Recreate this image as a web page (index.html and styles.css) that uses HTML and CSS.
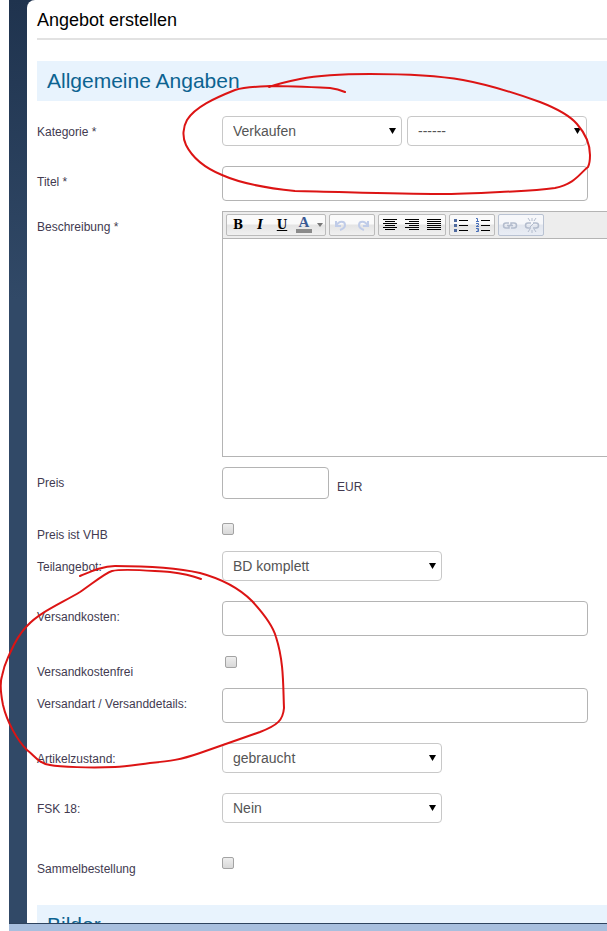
FILE: index.html
```
<!DOCTYPE html>
<html lang="de">
<head>
    <meta charset="UTF-8">
    <meta name="viewport" content="width=device-width, initial-scale=1.0">
    <title>Angebot erstellen</title>
    <link rel="stylesheet" href="styles.css">
</head>
<body>
    <div class="window">
        <main class="page">
            <h1>Angebot erstellen</h1>

            <form>
                <h2>Allgemeine Angaben</h2>

                <div class="row">
                    <label for="kategorie">Kategorie *</label>
                    <div class="field">
                        <span class="select small"><select id="kategorie"><option>Verkaufen</option></select></span>
                        <span class="select small"><select aria-label="Unterkategorie"><option>------</option></select></span>
                    </div>
                </div>

                <div class="row tight">
                    <label for="titel">Titel *</label>
                    <div class="field"><input type="text" id="titel"></div>
                </div>

                <div class="row tight">
                    <label for="beschreibung">Beschreibung *</label>
                    <div class="editor">
                        <div class="toolbar">
                            <div class="group">
                                <button type="button" class="glyph bold">B</button>
                                <button type="button" class="glyph italic">I</button>
                                <button type="button" class="glyph underline">U</button>
                                <button type="button" class="glyph color">A</button>
                                <button type="button" class="more" aria-label="Farbe wählen">
                                    <svg width="6" height="4"><path d="M0 0h6L3 4z" fill="#777"/></svg>
                                </button>
                            </div>
                            <div class="group">
                                <button type="button" aria-label="Rückgängig">
                                    <svg width="16" height="16" fill="none" stroke="#c0cce8" stroke-width="2"><path d="M3 4v5h5M3 9c3-6 9-5 9-1 0 3-2 4-5 5"/></svg>
                                </button>
                                <button type="button" aria-label="Wiederholen">
                                    <svg width="16" height="16" fill="none" stroke="#c0cce8" stroke-width="2"><path d="M13 4v5H8M13 9c-3-6-9-5-9-1 0 3 2 4 5 5"/></svg>
                                </button>
                            </div>
                            <div class="group">
                                <button type="button" aria-label="Zentriert">
                                    <svg width="16" height="16" stroke="#000"><path d="M1 2.5h14M3 4.5h10M1 6.5h14M3 8.5h10M1 10.5h14M3 12.5h10"/></svg>
                                </button>
                                <button type="button" aria-label="Rechtsbündig">
                                    <svg width="16" height="16" stroke="#000"><path d="M1 2.5h14M5 4.5h10M1 6.5h14M5 8.5h10M1 10.5h14M5 12.5h10"/></svg>
                                </button>
                                <button type="button" aria-label="Blocksatz">
                                    <svg width="16" height="16" stroke="#000"><path d="M1 2.5h14M1 4.5h14M1 6.5h14M1 8.5h14M1 10.5h14M1 12.5h14"/></svg>
                                </button>
                            </div>
                            <div class="group">
                                <button type="button" aria-label="Liste">
                                    <svg width="16" height="16"><path d="M6 3.5h9M6 8.5h9M6 13.5h9" stroke="#000"/><path d="M1 2h3v3H1zM1 7h3v3H1zM1 12h3v3H1z" fill="#4f6a9f"/></svg>
                                </button>
                                <button type="button" aria-label="Nummerierte Liste">
                                    <svg width="16" height="16"><path d="M6 3.5h9M6 8.5h9M6 13.5h9" stroke="#000"/><path d="M1 1.5h1.5v3M1 4.5h3M1 6.5h2.5v1.5L1 9.5h3M1 11.5h2.5v3H1M2 13h1.5" fill="none" stroke="#4a70b8"/></svg>
                                </button>
                            </div>
                            <div class="group off">
                                <button type="button" aria-label="Link">
                                    <svg width="16" height="16" fill="none" stroke="#b3bccd" stroke-width="1.5"><path d="M7 6H4a2.5 2.5 0 0 0 0 5h3V9M9 11h3a2.5 2.5 0 0 0 0-5H9v2M5 8.5h6"/></svg>
                                </button>
                                <button type="button" aria-label="Link entfernen">
                                    <svg width="16" height="16" fill="none" stroke="#b3bccd" stroke-width="1.5"><path d="M7 6H4a2.5 2.5 0 0 0 0 5h3M9 11h3a2.5 2.5 0 0 0 0-5H9"/><path d="M8 1v3M4 1l2 3M12 1l-2 3M8 13v3M4 15l2-3M12 15l-2-3M6 10l4-4" stroke-width="1"/></svg>
                                </button>
                            </div>
                        </div>
                        <textarea id="beschreibung"></textarea>
                    </div>
                </div>

                <div class="row">
                    <label for="preis">Preis</label>
                    <div class="field"><input type="text" id="preis" class="price"><span class="unit">EUR</span></div>
                </div>

                <div class="row check">
                    <label for="vhb">Preis ist VHB</label>
                    <div class="field"><input type="checkbox" id="vhb"></div>
                </div>

                <div class="row">
                    <label for="teilangebot">Teilangebot:</label>
                    <div class="field"><span class="select"><select id="teilangebot"><option>BD komplett</option></select></span></div>
                </div>

                <div class="row">
                    <label for="versandkosten">Versandkosten:</label>
                    <div class="field"><input type="text" id="versandkosten"></div>
                </div>

                <div class="row check free">
                    <label for="versandkostenfrei">Versandkostenfrei</label>
                    <div class="field"><input type="checkbox" id="versandkostenfrei"></div>
                </div>

                <div class="row">
                    <label for="versandart">Versandart / Versanddetails:</label>
                    <div class="field"><input type="text" id="versandart"></div>
                </div>

                <div class="row">
                    <label for="zustand">Artikelzustand:</label>
                    <div class="field"><span class="select"><select id="zustand"><option>gebraucht</option></select></span></div>
                </div>

                <div class="row wide">
                    <label for="fsk">FSK 18:</label>
                    <div class="field"><span class="select"><select id="fsk"><option>Nein</option></select></span></div>
                </div>

                <div class="row check last">
                    <label for="sammel">Sammelbestellung</label>
                    <div class="field"><input type="checkbox" id="sammel"></div>
                </div>

                <h2>Bilder</h2>
            </form>
        </main>
        <footer class="statusbar"></footer>
    </div>

    <!-- red pen marks -->
    <svg class="marks" width="607" height="931" viewBox="0 0 607 931" fill="none" stroke="#dc1414" stroke-width="2" stroke-linecap="round" stroke-linejoin="round">
        <path d="M269 87C280 83 290 81 300 79C315 76 330 74 370 74C410 74 440 76 463 80C490 85 515 93 540 102C558 109 571 117 577 124C584 132 590 143 590 155Q590 163 588 167C580 173 575 184 555 188C535 191 520 191 500 192C480 193 460 194 440 194C395 194 345 192 295 191C265 188 240 183 222 175C205 168 192 157 186 145C182 137 183 127 187 120C195 107 215 98 235 90C247 86 260 87 270 86C290 86 310 87 330 88Q338 89 345 92"/>
        <path d="M80 576C92 571 103 566 115 566C145 566 178 568 200 573C222 579 238 587 252 601C264 614 273 626 276 637C284 662 283 685 284 708C283 720 278 725 260 732C240 739 220 746 200 753C180 760 170 761 150 763C135 765 125 767 115 767C90 768 60 767 50 765C38 763 35 756 27 750C17 740 7 722 3 705C1 695 0 682 2 676C4 665 7 660 10 653Q18 635 27 626C40 612 60 604 80 592C92 584 105 573 112 571C125 568 150 571 170 572Q188 574 201 579"/>
    </svg>
</body>
</html>
```
FILE: styles.css
```
* { box-sizing: border-box; }
body { margin: 0; background: white; font-family: Arial, "Liberation Sans", sans-serif; font-size: 12px; color: #423a50; }

.window { display: flex; flex-direction: column; height: 100vh; margin-left: 9px; overflow: hidden; background: linear-gradient(#1f334e, #314967 300px); }
.page { flex: 1; min-height: 0; overflow: hidden; margin-left: 18px; padding-left: 10px; background: white; border-top-left-radius: 8px; }
.statusbar { flex: none; height: 8px; background: #a8bfde; border-top: 1px solid #2e435e; }

h1 { margin: 0 0 21px; padding-top: 2px; height: 40px; font-size: 18px; font-weight: normal; line-height: 36px; color: #000; border-bottom: 2px solid #e2e2e2; }
h2 { margin: 0 0 15px; padding-left: 10px; font-size: 21px; font-weight: normal; line-height: 40px; color: #0c6391; background: #e8f3fd; }

.row { display: grid; grid-template-columns: 185px 1fr; align-items: start; margin-bottom: 20px; }
.row.tight { margin-bottom: 10px; }
.row.wide { margin-bottom: 30px; }
.row.check { min-height: 32px; margin-bottom: 0; }
.row.last { margin-bottom: 20px; }
.row > label { height: 30px; line-height: 32px; }
.field { display: flex; gap: 5px; }

input[type=text] { width: 366px; height: 35px; padding: 0 10px; font: 14px Arial, "Liberation Sans", sans-serif; border: 1px solid #b4b4b4; border-radius: 4px; background: white; }
input.price { width: 107px; height: 32px; }
.unit { padding-left: 3px; line-height: 40px; height: 32px; }

.select { position: relative; width: 220px; }
.select.small { width: 180px; }
.select select { display: block; width: 100%; height: 30px; padding: 0 10px; appearance: none; font: 14px Arial, "Liberation Sans", sans-serif; color: #555; background: white; border: 1px solid #c8c8c8; border-radius: 4px; }
.select::after { content: ""; position: absolute; right: 6px; top: 12px; width: 7px; height: 6px; background: #000; clip-path: polygon(0 0, 100% 0, 50% 100%); pointer-events: none; }

input[type=checkbox] { appearance: none; width: 12px; height: 12px; margin: 4px 0 0; border: 1px solid #a3a3a3; border-radius: 2px; background: linear-gradient(#eee, #d8d8d8); }
.free input[type=checkbox] { margin: 0 0 0 3px; }

.editor { border: 1px solid #b4b4b4; border-right: 0; }
.toolbar { display: flex; gap: 3px; height: 27px; padding: 2px 3px; background: #ededed; border-bottom: 1px solid #b4b4b4; overflow: hidden; }
.group { display: flex; flex: none; height: 22px; border: 1px solid #bbb; border-radius: 2px; background: linear-gradient(#fafafa 45%, #e4e4e4 50%, #f0f0f0); }
.group.off { border-color: #b9c2d2; background: linear-gradient(#f6f7fa 45%, #e2e6ee 50%, #e9edf5); }
.group button { display: flex; align-items: center; justify-content: center; width: 22px; height: 20px; padding: 0; border: 0; background: none; color: #000; }
.group .more { width: 10px; }
.group .glyph { font: bold 12px "DejaVu Serif", serif; }
.group .italic { font-style: italic; }
.group .underline { text-decoration: underline; }
.group .color { height: 18px; margin: 0 3px; width: 16px; font: bold 15px "Liberation Serif", serif; line-height: 14px; color: #3a5a94; border-bottom: 4px solid #8b8b8b; }
.editor textarea { display: block; width: 100%; height: 217px; padding: 8px; border: 0; resize: none; background: white; }

.marks { position: absolute; left: 0; top: 0; pointer-events: none; }
```
